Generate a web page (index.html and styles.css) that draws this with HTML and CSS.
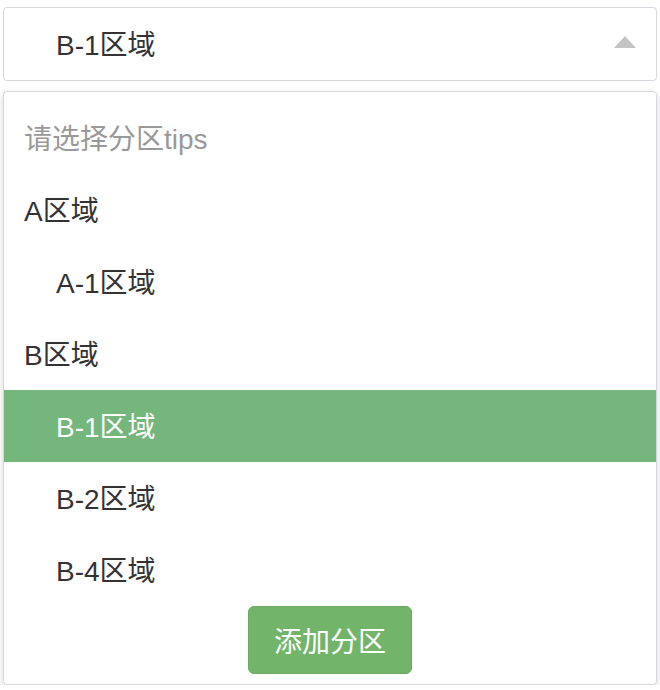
FILE: index.html
```html
<!DOCTYPE html>
<html lang="zh">
<head>
<meta charset="utf-8">
<link rel="stylesheet" href="styles.css">
</head>
<body>
<div class="page">
  <div class="select">
    <span class="select-value">B-1区域</span>
    <span class="caret"></span>
  </div>
  <div class="dropdown">
    <div class="row tip">请选择分区tips</div>
    <div class="row group">A区域</div>
    <div class="row option">A-1区域</div>
    <div class="row group">B区域</div>
    <div class="row option active">B-1区域</div>
    <div class="row option">B-2区域</div>
    <div class="row option">B-4区域</div>
    <div class="footer">
      <button class="add-btn">添加分区</button>
    </div>
  </div>
</div>
</body>
</html>
```

FILE: styles.css
```css
html, body {
  margin: 0;
  padding: 0;
  background: #ffffff;
}
body {
  font-family: "Liberation Sans", "Noto Sans CJK SC", sans-serif;
  color: #333333;
  font-size: 28px;
}
.page {
  padding: 7px 3px 0;
}
.select {
  height: 72px;
  border: 1px solid #d4d7dc;
  border-radius: 4px;
  display: flex;
  align-items: center;
  justify-content: space-between;
  padding: 0 20px 0 52px;
}
.select-value {
  line-height: 1;
  margin-top: 3px;
}
.caret {
  width: 0;
  height: 0;
  border-left: 11px solid transparent;
  border-right: 11px solid transparent;
  border-bottom: 12px solid #c4c4c4;
  margin-top: -4px;
}
.dropdown {
  margin-top: 10px;
  border: 1px solid #d4d7dc;
  border-radius: 4px;
  padding-top: 10px;
  box-shadow: 0 2px 6px rgba(0, 0, 0, 0.16);
}
.row {
  height: 72px;
  display: flex;
  align-items: center;
  padding-left: 20px;
  padding-bottom: 2px;
  box-sizing: border-box;
}
.tip {
  color: #999999;
}
.option {
  padding-left: 52px;
}
.active {
  background: #74b67c;
  color: #ffffff;
}
.footer {
  display: flex;
  justify-content: center;
  padding-bottom: 10px;
}
.add-btn {
  width: 164px;
  height: 68px;
  border: 1px solid #6aaa63;
  border-radius: 6px;
  background: #73b46b;
  color: #ffffff;
  font-family: "Liberation Sans", "Noto Sans CJK SC", sans-serif;
  font-size: 28px;
  padding: 0;
}
```
